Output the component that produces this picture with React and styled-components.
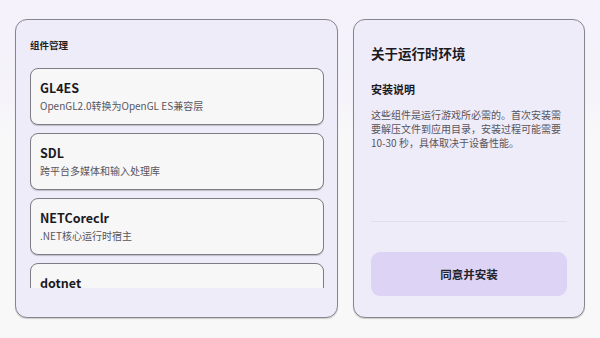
import React from "react";
import styled, { createGlobalStyle } from "styled-components";

const GlobalStyle = createGlobalStyle`
  html, body {
    margin: 0;
    padding: 0;
  }
  body {
    font-family: "Noto Sans CJK SC", "Noto Sans", sans-serif;
    background: #f8f8f9;
  }
`;

const Page = styled.div`
  width: 600px;
  height: 338px;
  box-sizing: border-box;
  padding: 19px 15px 20px 15px;
  display: flex;
  gap: 15px;
  background: linear-gradient(180deg, #f4f1fb 0%, #f6f4fa 30%, #f8f8f9 40%, #f8f8f9 100%);
`;

const Panel = styled.div`
  width: ${(p) => p.width}px;
  box-sizing: border-box;
  border: 1px solid #88868d;
  border-radius: 12px;
  background: #efecfa;
  box-shadow: 0 1px 1px rgba(0, 0, 0, 0.18);
  display: flex;
  flex-direction: column;
`;

const LeftPanel = styled(Panel)`
  padding: 18px 13px 0 14px;
`;

const RightPanel = styled(Panel)`
  padding: 23px 17px 21px 17px;
`;

const SectionTitle = styled.div`
  font-size: 9.5px;
  font-weight: 700;
  line-height: 14px;
  color: #1d1c21;
`;

const List = styled.div`
  margin-top: 16px;
  height: 220px;
  overflow: hidden;
  display: flex;
  flex-direction: column;
  gap: 8px;
`;

const Card = styled.div`
  flex: 0 0 57px;
  box-sizing: border-box;
  border: 1px solid #7f7d84;
  border-radius: 8px;
  background: #f8f7f8;
  box-shadow: 0 1px 1px rgba(0, 0, 0, 0.2);
  padding: 11px 9px 0 9px;
`;

const CardName = styled.div`
  font-size: 12.5px;
  font-weight: 700;
  line-height: 16px;
  color: #1b1a1f;
`;

const CardDesc = styled.div`
  margin-top: 3px;
  font-size: 10px;
  line-height: 14px;
  color: #57555c;
`;

const Heading = styled.div`
  font-size: 13.5px;
  font-weight: 700;
  line-height: 20px;
  color: #1b1a1f;
`;

const SubHeading = styled.div`
  margin-top: 18px;
  font-size: 11px;
  font-weight: 700;
  line-height: 16px;
  color: #1b1a1f;
`;

const Paragraph = styled.p`
  margin: 11px 0 0 0;
  font-size: 10px;
  line-height: 14px;
  color: #57555c;
`;

const Spacer = styled.div`
  flex: 1;
`;

const Divider = styled.div`
  height: 1px;
  background: #e2deec;
`;

const Button = styled.button`
  margin-top: 30px;
  height: 44px;
  border: none;
  border-radius: 9px;
  background: #ddd4f5;
  font-family: inherit;
  font-size: 11.5px;
  font-weight: 700;
  color: #25232a;
  cursor: pointer;
`;

const components = [
  { name: "GL4ES", desc: "OpenGL2.0转换为OpenGL ES兼容层" },
  { name: "SDL", desc: "跨平台多媒体和输入处理库" },
  { name: "NETCoreclr", desc: ".NET核心运行时宿主" },
  { name: "dotnet", desc: ".NET运行时" },
];

export default function App() {
  return (
    <>
      <GlobalStyle />
      <Page>
        <LeftPanel width={323}>
          <SectionTitle>组件管理</SectionTitle>
          <List>
            {components.map((c) => (
              <Card key={c.name}>
                <CardName>{c.name}</CardName>
                <CardDesc>{c.desc}</CardDesc>
              </Card>
            ))}
          </List>
        </LeftPanel>
        <RightPanel width={232}>
          <Heading>关于运行时环境</Heading>
          <SubHeading>安装说明</SubHeading>
          <Paragraph>
            这些组件是运行游戏所必需的。首次安装需要解压文件到应用目录，安装过程可能需要10-30
            秒，具体取决于设备性能。
          </Paragraph>
          <Spacer />
          <Divider />
          <Button>同意并安装</Button>
        </RightPanel>
      </Page>
    </>
  );
}
